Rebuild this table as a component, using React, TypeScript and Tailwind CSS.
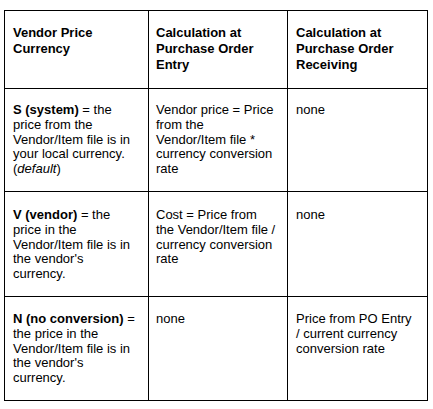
const rows = [
  {
    pad: "pt-[14px]",
    cells: [
      <>
        <b>S (system)</b> = the<br />price from the<br />Vendor/Item file is in<br />your local currency.<br />(<i>default</i>)
      </>,
      <>
        Vendor price = Price<br />from the<br />Vendor/Item file *<br />currency conversion<br />rate
      </>,
      <>none</>,
    ],
  },
  {
    pad: "pt-[16px]",
    cells: [
      <>
        <b>V (vendor)</b> = the<br />price in the<br />Vendor/Item file is in<br />the vendor's<br />currency.
      </>,
      <>
        Cost = Price from<br />the Vendor/Item file /<br />currency conversion<br />rate
      </>,
      <>none</>,
    ],
  },
  {
    pad: "pt-[15px]",
    cells: [
      <>
        <b>N (no conversion)</b> =<br />the price in the<br />Vendor/Item file is in<br />the vendor's<br />currency.
      </>,
      <>none</>,
      <>
        Price from PO Entry<br />/ current currency<br />conversion rate
      </>,
    ],
  },
]

const padX = ["pl-[8px]", "pl-[7px]", "pl-[8px]"]

export default function App() {
  return (
    <div className="w-[433px] h-[409px] bg-white pt-[10px] pl-[4px] font-['Liberation_Sans',Arial,sans-serif] text-[13px] text-black">
      <div className="grid w-[424px] grid-cols-[143px_138px_139px] grid-rows-[77px_102px_104px_103px] gap-px bg-black p-px">
        {/* header */}
        <div className={`bg-white pt-[14px] font-bold leading-[16px] ${padX[0]}`}>
          Vendor Price<br />Currency
        </div>
        <div className={`bg-white pt-[14px] font-bold leading-[16px] ${padX[1]}`}>
          Calculation at<br />Purchase Order<br />Entry
        </div>
        <div className={`bg-white pt-[14px] font-bold leading-[16px] ${padX[2]}`}>
          Calculation at<br />Purchase Order<br />Receiving
        </div>

        {rows.map((row, i) =>
          row.cells.map((cell, j) => (
            <div key={`${i}-${j}`} className={`bg-white leading-[14.75px] ${row.pad} ${padX[j]}`}>
              {cell}
            </div>
          ))
        )}
      </div>
    </div>
  )
}
